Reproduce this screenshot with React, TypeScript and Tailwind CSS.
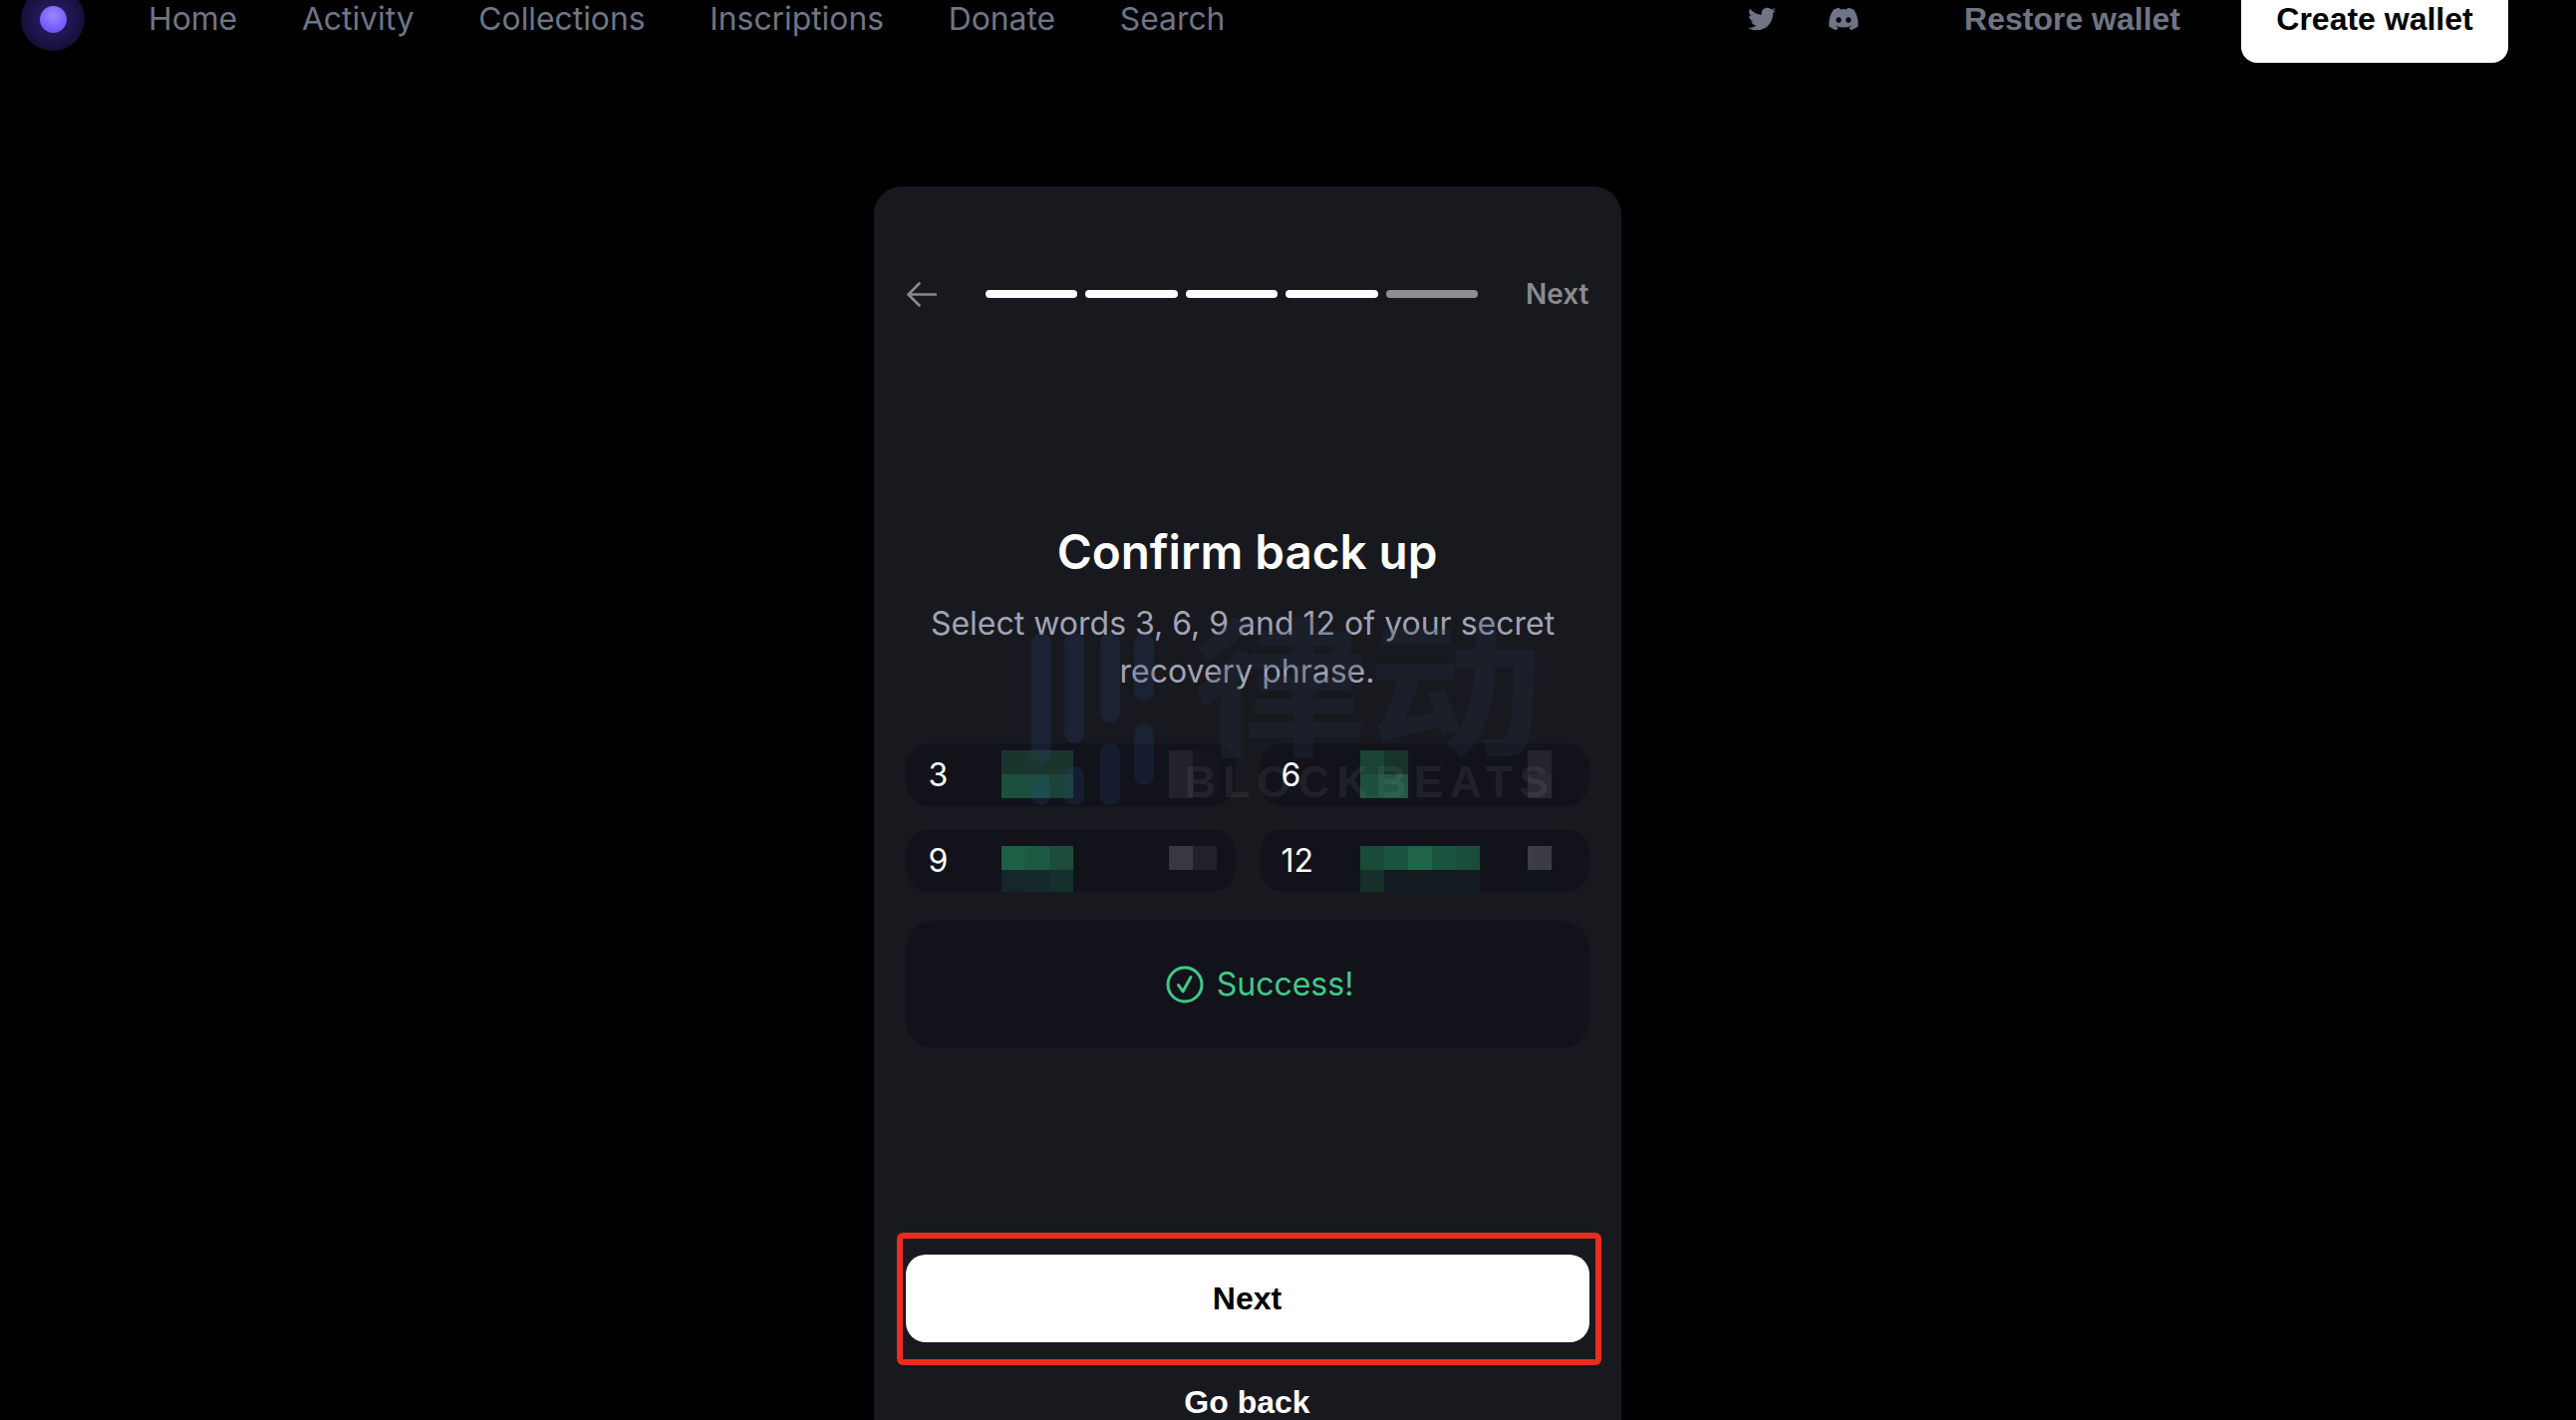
import React from "react";
import { FaTwitter, FaDiscord } from "react-icons/fa";

const inter = "font-['Inter',sans-serif]";
const arial = "font-['Liberation_Sans',Arial,sans-serif]";

const navItems = [
  { label: "Home" },
  { label: "Activity" },
  { label: "Collections" },
  { label: "Inscriptions" },
  { label: "Donate" },
  { label: "Search" },
];

const _ = "bg-transparent";

const words = [
  {
    n: "3",
    numClass: "w-[96px] pl-[23px]",
    gridClass: "mt-[7px]",
    cells: [
      "bg-[#19352e]", "bg-[#1a372f]", "bg-[#19352e]", _, _, _, _, "bg-[#22222c]", "bg-[#14151d]",
      "bg-[#1d4f3e]", "bg-[#1d4f3e]", "bg-[#1b4336]", _, _, _, _, "bg-[#22222c]", "bg-[#14151d]",
    ],
  },
  {
    n: "6",
    numClass: "w-[101px] pl-[22px]",
    gridClass: "mt-[7px]",
    cells: [
      "bg-[#1a4335]", "bg-[#16332c]", _, _, _, _, _, "bg-[#24242e]", _,
      "bg-[#1d503e]", "bg-[#225645]", _, _, _, _, _, "bg-[#2a2a34]", _,
    ],
  },
  {
    n: "9",
    numClass: "w-[96px] pl-[23px]",
    gridClass: "mt-[17px]",
    cells: [
      "bg-[#1e6045]", "bg-[#1d5a42]", "bg-[#1d4c3a]", _, _, _, _, "bg-[#383843]", "bg-[#20212a]",
      "bg-[#15272a]", "bg-[#15282a]", "bg-[#15302c]", _, _, _, _, _, _,
    ],
  },
  {
    n: "12",
    numClass: "w-[101px] pl-[22px]",
    gridClass: "mt-[17px]",
    cells: [
      "bg-[#1a4a38]", "bg-[#1b5540]", "bg-[#1f6648]", "bg-[#1b5540]", "bg-[#1a4d3a]", _, _, "bg-[#3c3c47]", _,
      "bg-[#163029]", "bg-[#131a20]", "bg-[#131a20]", "bg-[#131a20]", "bg-[#131a20]", _, _, "bg-[#12141c]", _,
    ],
  },
];

function WordField({ w }: { w: (typeof words)[number] }) {
  return (
    <div className="flex h-[63px] overflow-hidden rounded-[24px] bg-[#12131a]">
      <span className={`${w.numClass} ${inter} self-center text-[32px] leading-none text-white`}>{w.n}</span>
      <div className={`${w.gridClass} grid grid-cols-[repeat(9,24px)] auto-rows-[24px]`}>
        {w.cells.map((c, i) => (
          <div key={i} className={c} />
        ))}
      </div>
    </div>
  );
}

function Logo() {
  return (
    <div className="flex h-[64px] w-[64px] items-center justify-center rounded-full bg-[radial-gradient(circle,#2a2068_0%,#1d1650_45%,#120e33_75%,#070514_100%)]">
      <div className="h-[27px] w-[27px] rounded-full bg-[radial-gradient(circle_at_50%_35%,#9a88fc_0%,#7a62fa_55%,#5f45f4_100%)]" />
    </div>
  );
}

function BackArrow() {
  return (
    <svg className="ml-[1px]" width="30" height="25" viewBox="0 0 30 25" fill="none" stroke="#8a8a8e" strokeWidth="2.6" strokeLinecap="round" strokeLinejoin="round">
      <path d="M29 12.5 H2 M12.5 1.5 L1.5 12.5 L12.5 23.5" />
    </svg>
  );
}

function Watermark() {
  return (
    <div className="pointer-events-none absolute left-[150px] top-[445px] h-[180px] w-[540px]">
      <svg className="absolute left-[8px] top-[3px]" width="125" height="175" viewBox="0 0 125 175" fill="#28467f" fillOpacity="0.22">
        <rect x="0" y="0" width="20" height="130" rx="10" />
        <rect x="33" y="0" width="20" height="111" rx="10" />
        <rect x="69" y="0" width="20" height="90" rx="10" />
        <rect x="103" y="0" width="20" height="68" rx="10" />
        <rect x="103" y="91" width="20" height="62" rx="10" />
        <rect x="69" y="111" width="20" height="62" rx="10" />
        <rect x="33" y="134" width="20" height="39" rx="10" />
        <rect x="0" y="144" width="20" height="29" rx="10" />
      </svg>
      <span className="absolute left-[170px] top-[-24px] origin-top scale-y-[0.85] font-['Noto_Sans_CJK_SC',sans-serif] text-[176px] font-bold leading-none text-[#25354a]/25 whitespace-nowrap">
        律动
      </span>
      <span className="absolute left-[162px] top-[131px] font-['Liberation_Sans',sans-serif] text-[44px] font-bold leading-none tracking-[7px] text-white/8 whitespace-nowrap">
        BLOCKBEATS
      </span>
    </div>
  );
}

export default function App() {
  return (
    <div className={`h-[1425px] w-full overflow-hidden bg-black ${inter}`}>
      <header className="-mt-[25px] flex h-[88px] items-center pl-[21px] pr-[68px]">
        <Logo />
        <nav className="ml-[64px] flex gap-[64.8px] text-[31.8px] text-[#6f7585]">
          {navItems.map((n) => (
            <a key={n.label}>{n.label}</a>
          ))}
        </nav>
        <div className="ml-auto flex items-center text-[#6f7585]">
          <FaTwitter className="h-[28px] w-[28px]" />
          <FaDiscord className="ml-[52px] h-[32px] w-[32px]" />
          <span className={`${arial} ml-[105px] text-[32px] font-bold`}>Restore wallet</span>
          <button className={`${arial} ml-[61px] flex h-[88px] w-[268px] items-center justify-center rounded-[16px] bg-white text-[32px] font-bold text-black`}>
            Create wallet
          </button>
        </div>
      </header>

      <div className="mt-[124px] flex justify-center pr-[82px]">
        <main className="relative h-[1400px] w-[750px] shrink-0 rounded-[28px] bg-[#18191f] px-8 pt-[88px]">
          <div className="flex h-[40px] items-center">
            <BackArrow />
            <div className="ml-[49px] flex gap-[8px]">
              <div className="h-2 w-[92.6px] rounded-full bg-white" />
              <div className="h-2 w-[92.6px] rounded-full bg-white" />
              <div className="h-2 w-[92.6px] rounded-full bg-white" />
              <div className="h-2 w-[92.6px] rounded-full bg-white" />
              <div className="h-2 w-[92.6px] rounded-full bg-[#8e8e92]" />
            </div>
            <span className="ml-auto text-[28px] font-semibold text-[#8a8a8e]">Next</span>
          </div>

          <h1 className="mt-[211px] text-center text-[47.6px] font-semibold leading-[56px] text-white">Confirm back up</h1>
          <p className="mt-[20px] text-center text-[32px] leading-[47.5px] text-[#a1a3b5]">
            Select words 3, 6, 9 and 12 of your secret&nbsp;
            <br />
            recovery phrase.
          </p>

          <div className="mt-[49px] grid grid-cols-2 gap-x-[24px] gap-y-[23px]">
            {words.map((w) => (
              <WordField key={w.n} w={w} />
            ))}
          </div>

          <div className="mt-[29px] flex h-[128px] items-center justify-center gap-[12.5px] rounded-[28px] bg-[#12131a] pl-[25.5px] text-[32px] text-[#3fc98a]">
            <svg width="38" height="38" viewBox="0 0 38 38" fill="none" stroke="currentColor" strokeWidth="3" strokeLinecap="round" strokeLinejoin="round">
              <circle cx="19" cy="19" r="17" />
              <path d="M12.5 19.5 L17 26 L25 11.5" />
            </svg>
            <span>Success!</span>
          </div>

          <div className="mt-[185px] -ml-[9px] -mr-[12px] rounded-[6px] border-[6px] border-[#ee2b1f] pb-[17px] pl-[3px] pr-[6px] pt-[16px]">
            <button className={`${arial} h-[88px] w-full rounded-[20px] bg-white text-[32px] font-bold text-black`}>Next</button>
          </div>
          <div className={`${arial} mt-[18px] text-center text-[32px] font-bold leading-[38px] text-white`}>Go back</div>

          <Watermark />
        </main>
      </div>
    </div>
  );
}
